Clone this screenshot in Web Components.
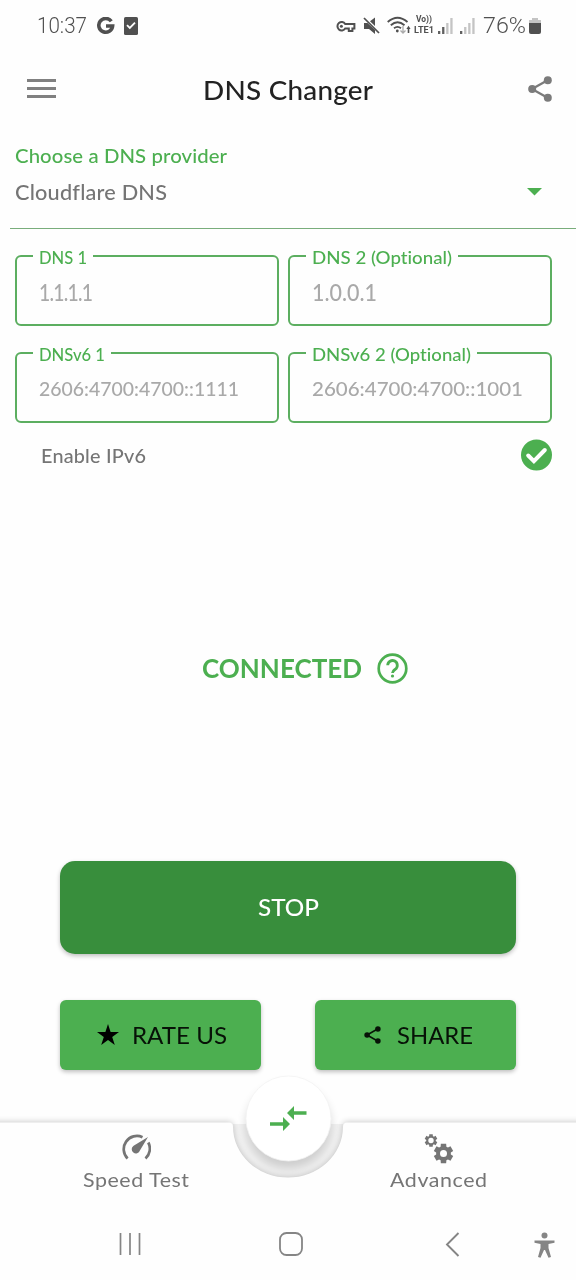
<!DOCTYPE html>
<html lang="en">
<head>
<meta charset="utf-8">
<title>DNS Changer</title>
<style>
html,body{margin:0;padding:0;background:#fefefe}
body{width:576px;height:1280px;overflow:hidden;font-family:Lato,"Open Sans",sans-serif;font-weight:500}
</style>
</head>
<body>
<dns-app></dns-app>
<script>
const define = (name, html, after) => {
  const t = document.createElement('template');
  t.innerHTML = html;
  customElements.define(name, class extends HTMLElement {
    connectedCallback() {
      if (this.shadowRoot) return;
      this.attachShadow({mode: 'open'}).appendChild(t.content.cloneNode(true));
      if (after) after(this, this.shadowRoot);
    }
  });
};

/* A single line of text tracked and stretched to a set width. */
define('fit-text', `<style>
:host{display:block;white-space:nowrap;line-height:1.2;flex:none;font-variant-ligatures:none}
span{display:inline-block;transform-origin:0 50%}
</style><span><slot></slot></span>`, (el, root) => {
  const w = +el.getAttribute('w'), s = root.querySelector('span');
  el.style.width = w + 'px';
  el.style.fontSize = el.getAttribute('size') + 'px';
  const text = root.querySelector('slot').assignedNodes({flatten: true}).map(x => x.textContent).join('').trim();
  const n = text.length, nat = s.getBoundingClientRect().width;
  const k = Math.min(1.07, Math.max(.86, w / nat));
  s.style.letterSpacing = ((w / k - nat) / Math.max(1, n - 1)) + 'px';
  s.style.transform = `scaleX(${k})`;
});

define('status-bar', `<style>
:host{display:flex;height:51px;margin-bottom:-1px;box-sizing:border-box;padding:0 34px 0 37px;align-items:center;color:#505050;font-family:Roboto,sans-serif;font-weight:300}
svg{display:block;flex:none}
.sp{flex:1}
.vo{display:flex;flex-direction:column;font-weight:700;margin-left:2px;width:21px;margin-top:-1px}
.vo fit-text{line-height:11px;height:11px}
.vo fit-text:first-child{margin-left:2px}
</style>
<fit-text w="50" size="22.5">10:37</fit-text>
<svg style="margin-left:10px" width="18" height="18" viewBox="0 0 18 18"><path d="M14.3 4.3A6.9 6.9 0 1 0 15.6 9H9" fill="none" stroke="#505050" stroke-width="3.6"/></svg>
<svg style="margin-left:9px" width="14" height="18" viewBox="0 0 14 18"><rect width="14" height="18" rx="1.6" fill="#505050"/><path d="M3 8.2l2.8 2.8L11 5.7" fill="none" stroke="#fff" stroke-width="1.8"/></svg>
<span class="sp"></span>
<svg width="20" height="14" viewBox="0 0 20 14"><path d="M9.2 5H18.4V9.5H16.4V12H12.8V9.5H9.2A4.2 4.2 0 1 1 9.2 5Z" fill="none" stroke="#505050" stroke-width="2"/><circle cx="5.4" cy="7.2" r="1.5" fill="#505050"/></svg>
<svg style="margin-left:7px" width="17" height="18" viewBox="0 0 17 18"><path d="M1 6H4.5L12 13V17L6 12H1ZM7 4.2L12 .5V9Z" fill="#505050"/><path d="M1 1L16 16" stroke="#505050" stroke-width="1.7"/></svg>
<svg style="margin-left:7px" width="25" height="19" viewBox="0 0 25 19"><g fill="none" stroke="#505050" stroke-width="1.8"><path d="M.7 6Q10.5-2.6 20.5 6M3.8 9.2Q10.5 3.3 17.5 9.2M7 12.2Q10.5 9.5 14 12.2"/></g><circle cx="10.3" cy="15" r="1.4" fill="#505050"/><path d="M16 10v7M13.5 14.5L16 17l2.5-2.5" stroke="#aaa" stroke-width="1.3" fill="none"/><path d="M21.5 17v-5" stroke="#505050" stroke-width="1.6"/><path d="M19.4 13L21.5 9.800l2.1 3.2Z" fill="#505050"/></svg>
<div class="vo"><fit-text w="16" size="9">Vo))</fit-text><fit-text w="20" size="9">LTE1</fit-text></div>
<svg style="margin-left:3px" width="15" height="16" viewBox="0 0 15 16"><path fill="#606060" d="M0 13h2.3v3H0zM4.1 9h2.3v7H4.1z"/><path fill="#c4c4c4" d="M8.2 5h2.3v11H8.2zM12.3 0h2.3v16h-2.3z"/></svg>
<svg style="margin-left:7px" width="15" height="16" viewBox="0 0 15 16"><path fill="#606060" d="M0 13h2.3v3H0z"/><path fill="#c4c4c4" d="M4.1 9h2.3v7H4.1zM8.2 5h2.3v11H8.2zM12.3 0h2.3v16h-2.3z"/></svg>
<fit-text style="margin-left:8px" w="43" size="22.5">76%</fit-text>
<svg style="margin-left:3px;margin-right:1px" width="12" height="16" viewBox="0 0 12 16"><path d="M3 0h6v2h3v4H0V2h3z" fill="#c4c4c4"/><path d="M0 5h12v9q0 2-2 2H2q-2 0-2-2z" fill="#505050"/></svg>`);

define('share-icon', `<style>:host{display:block;flex:none}svg{display:block;width:100%;height:100%}</style>
<svg viewBox="0 0 24 26"><path d="M20 4L4 13l16 9" fill="none" stroke="currentColor" stroke-width="2.3"/><g fill="currentColor"><circle cx="19.8" cy="4.2" r="4"/><circle cx="4.2" cy="13" r="4"/><circle cx="19.8" cy="21.8" r="4"/></g></svg>`);

define('app-header', `<style>
:host{display:flex;height:78px;box-sizing:border-box;padding:0 24px 0 27px;align-items:center;justify-content:space-between;color:#222}
.m{width:29px;height:19px;display:flex;flex-direction:column;justify-content:space-between;margin-top:-1px}
.m i{height:3px;background:#808080}
share-icon{width:24px;height:26px;color:#7b7b7b}
</style><div class="m"><i></i><i></i><i></i></div><fit-text w="170" size="26" style="margin-left:-8px;margin-top:3px"><slot></slot></fit-text><share-icon></share-icon>`);

define('provider-select', `<style>
:host{display:block;height:101px;box-sizing:border-box;padding:17px 0 0 15px;color:#757575}
.l{color:#4caf50}
.r{display:flex;align-items:center;justify-content:space-between;height:24px;padding-right:34px;margin-top:12px}
.r svg{margin-top:1px}
hr{border:0;height:1px;background:#79ad7b;margin:24px 0 0 -5px}
</style>
<fit-text class="l" w="212" size="19"><slot name="label"></slot></fit-text>
<div class="r"><fit-text w="152" size="20.3"><slot></slot></fit-text><svg width="15" height="8" viewBox="0 0 15 8"><path d="M0 0h15L7.5 7.5z" fill="#4caf50"/></svg></div><hr>`);

/* Outlined input with its label set into the top border. */
define('dns-field', `<style>
:host{display:block;width:264px;height:77px;color:#4caf50}
fieldset{box-sizing:border-box;width:264px;height:77.5px;margin:0;border:2px solid #5cae60;border-radius:6px;padding:0 0 0 16px;min-width:0}
legend{padding:0 6px;height:15px;display:block}
legend fit-text{line-height:19px}
.v{color:#a9a9a9}
</style><fieldset><legend></legend><fit-text class="v"></fit-text></fieldset>`, (el, root) => {
  const mk = (w, size, text) => {
    const f = document.createElement('fit-text');
    f.setAttribute('w', w); f.setAttribute('size', size); f.textContent = text; return f;
  };
  const a = n => el.getAttribute(n);
  root.querySelector('legend').append(mk(a('lw'), 17.6, a('label')));
  const v = mk(a('vw'), a('vs'), a('value'));
  v.className = 'v';
  v.style.lineHeight = '27px';
  v.style.margin = (a('vs') < 21 ? 15 : 16) + 'px 0 0 6px';
  root.querySelector('.v').replaceWith(v);
});

define('action-button', `<style>
:host{display:flex;align-items:center;justify-content:center;box-sizing:border-box;height:70px;width:201px;border-radius:6px;background:#4caf50;color:#071207;font-weight:400;box-shadow:0 2px 4px rgba(0,0,0,.25)}
:host([primary]){width:456px;height:93px;border-radius:15px;background:#388e3c;color:#fff;font-weight:500}
</style><slot></slot>`);

define('tab-bar', `<style>
:host{display:block;position:relative;height:140px;color:#757575;font-weight:400}
.bg{position:absolute;left:0;top:0}
.t{position:relative;display:flex;justify-content:space-between;padding:64px 89px 0 83px}
.i{display:flex;flex-direction:column;align-items:center;gap:1px}
.i svg{display:block;height:32px}
</style>
<svg class="bg" width="576" height="140" viewBox="0 0 576 140">
<defs><filter id="s" x="-10%" y="-30%" width="120%" height="160%"><feGaussianBlur stdDeviation="3"/></filter><filter id="f" x="-30%" y="-30%" width="160%" height="160%"><feGaussianBlur stdDeviation="5"/></filter></defs>
<path d="M233 54H343V57A55 51 0 0 1 233 57Z" fill="#000" opacity=".05"/>
<circle cx="288.5" cy="56" r="43" fill="#000" opacity=".14" filter="url(#f)"/>
<path d="M-20 52H229Q233 52 233 57A55 50.5 0 0 0 343 57Q343 52 347 52H596V150H-20Z" fill="#000" opacity=".22" filter="url(#s)"/>
<path d="M0 52.5H229Q233 52.5 233 57A55 50.5 0 0 0 343 57Q343 52.5 347 52.5H576V140H0Z" fill="#fefefe"/>
<circle cx="288.5" cy="48.5" r="42.5" fill="#fff" stroke="#f2f2f2" stroke-width=".8"/>
<g fill="#4caf50"><path d="M270 52.2h13V47l7 7-7 7v-5.2h-13z"/><path d="M306.500 41.300h-12.500V36l-7 7 7 7v-5.200h12.500z"/></g>
</svg>
<div class="t">
<div class="i"><svg width="30" viewBox="0 0 30 32" style="margin-left:-1px"><g fill="none" stroke="#757575" stroke-width="2.7"><path d="M6.6 24.500A13.200 13.200 0 0 1 21.500 3.200M27.300 8.500A13.200 13.200 0 0 1 24.500 24.500"/></g><path d="M27 3L18.900 16.500A4.200 4.200 0 1 1 12.600 11.700Z" fill="#757575"/></svg><fit-text w="106" size="20">Speed Test</fit-text></div>
<div class="i"><svg id="g" width="30" viewBox="0 0 30 32"></svg><fit-text w="97" size="20">Advanced</fit-text></div>
</div>`, (el, root) => {
  const gear = (cx, cy, r, hole) => {
    let d = '';
    for (let i = 0; i < 6; i++) {
      const b = i * Math.PI / 3 - Math.PI / 2;
      [[-.4, .74], [-.27, 1], [.27, 1], [.4, .74]].forEach(([a, k]) => {
        d += (d ? 'L' : 'M') + (cx + Math.cos(b + a) * r * k).toFixed(2) + ' ' + (cy + Math.sin(b + a) * r * k).toFixed(2);
      });
    }
    return `<path fill-rule="evenodd" fill="#757575" d="${d}ZM${cx - hole} ${cy}a${hole} ${hole} 0 1 0 ${2 * hole} 0a${hole} ${hole} 0 1 0 ${-2 * hole} 0Z"/>`;
  };
  root.querySelector('#g').innerHTML = gear(7, 6.5, 6.5, 2.7) + gear(19.5, 19.5, 10, 3.5);
});

define('nav-keys', `<style>
:host{display:flex;height:70px;box-sizing:border-box;padding:22px 21px 0 118px}
svg{display:block;flex:none}
</style>
<svg width="24" height="24" viewBox="0 0 24 24"><path d="M2.5 1v22M12 1v22M21.500 1v22" stroke="#858585" stroke-width="1.7"/></svg>
<svg style="margin-left:137px" width="24" height="24" viewBox="0 0 24 24"><rect x="1" y="1" width="22" height="22" rx="6.500" fill="none" stroke="#858585" stroke-width="1.8"/></svg>
<svg style="margin-left:142px" width="15" height="25" viewBox="0 0 15 25"><path d="M13.500 1L2 12.500L13.500 24" fill="none" stroke="#858585" stroke-width="1.9"/></svg>
<svg style="margin-left:74px" width="21" height="26" viewBox="0 0 21 26"><circle cx="10.500" cy="3.500" r="3" fill="#858585"/><path d="M.5 8.500h20v2.300L14.500 12v4l2.500 9-2.500.7L11 18h-1l-3.500 7.700L4 25l2.500-9v-4L.5 10.800Z" fill="#858585"/></svg>`);

define('dns-app', `<style>
:host{display:flex;flex-direction:column;width:576px;height:1280px;background:#fefefe}
.f{display:grid;grid-template-columns:264px 264px;column-gap:9px;row-gap:20px;padding:19px 0 1px 15px;height:174px}
.v6{display:flex;align-items:center;justify-content:space-between;padding:0 24px 0 41px;height:34px;margin-top:15px;color:#757575}
.v6 fit-text{margin-top:2px}
.c{display:flex;align-items:center;gap:15px;margin:179px 0 0 202px;height:34px;color:#4caf50;font-weight:700}
.c fit-text{margin-top:2px}
.b{display:flex;flex-wrap:wrap;justify-content:space-between;row-gap:46px;padding:176px 60px 0;color:#fff}
.grow{flex:1}
svg{display:block;flex:none}
</style>
<status-bar></status-bar>
<app-header>DNS Changer</app-header>
<provider-select><span slot="label">Choose a DNS provider</span>Cloudflare DNS</provider-select>
<div class="f">
<dns-field label="DNS 1" lw="48" value="1.1.1.1" vw="54" vs="22.5"></dns-field>
<dns-field label="DNS 2 (Optional)" lw="140" value="1.0.0.1" vw="65" vs="22.5"></dns-field>
<dns-field label="DNSv6 1" lw="66" value="2606:4700:4700::1111" vw="200" vs="20"></dns-field>
<dns-field label="DNSv6 2 (Optional)" lw="159" value="2606:4700:4700::1001" vw="211" vs="20"></dns-field>
</div>
<div class="v6"><fit-text w="105" size="18.5">Enable IPv6</fit-text><svg width="31" height="32" viewBox="0 0 31 32"><circle cx="15.5" cy="16" r="15.5" fill="#4caf50"/><path d="M7.2 16.5l5.7 5.7L23.800 11" fill="none" stroke="#fff" stroke-width="4" stroke-linecap="round"/></svg></div>
<div class="c"><fit-text w="160" size="26">CONNECTED</fit-text><svg width="31" height="31" viewBox="0 0 31 31"><circle cx="15.5" cy="15.5" r="13.8" fill="none" stroke="#4caf50" stroke-width="2.7"/><path d="M10.7 12.300a4.800 4.800 0 1 1 7.500 4c-1.700 1.200-2.700 1.800-2.700 3.700" fill="none" stroke="#4caf50" stroke-width="2.8"/><circle cx="15.5" cy="23" r="1.6" fill="#4caf50"/></svg></div>
<div class="b">
<action-button primary><fit-text w="61" size="23">STOP</fit-text></action-button>
<action-button><svg style="margin-right:13px;margin-left:3px" width="22" height="22" viewBox="0 0 22 22"><path d="M11 0l2.600 8H22l-6.800 4.900 2.600 8.100L11 16l-6.800 5 2.600-8.100L0 8h8.400z" fill="#000"/></svg><fit-text w="95" size="23.5">RATE US</fit-text></action-button>
<action-button><share-icon style="width:17px;height:18px;margin-right:16px;margin-left:5px"></share-icon><fit-text w="76" size="23.5">SHARE</fit-text></action-button>
</div>
<div class="grow"></div>
<tab-bar></tab-bar>
<nav-keys></nav-keys>`);
</script>
</body>
</html>
